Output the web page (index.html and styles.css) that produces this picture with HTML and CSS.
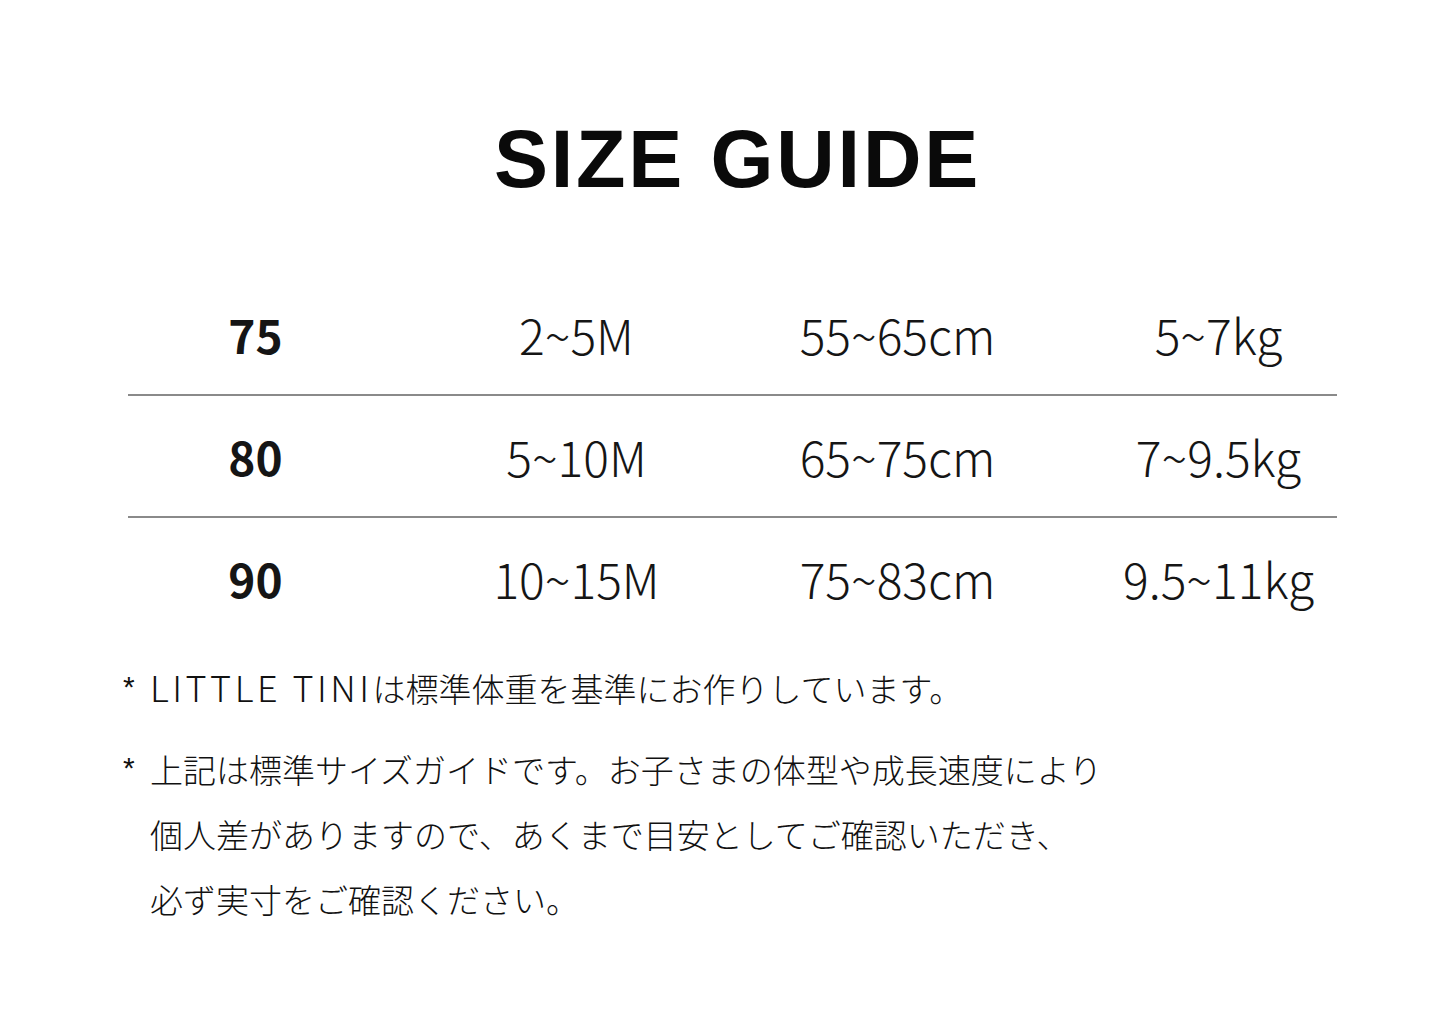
FILE: index.html
```html
<!DOCTYPE html>
<html lang="ja">
<head>
<meta charset="utf-8">
<title>SIZE GUIDE</title>
<link rel="stylesheet" href="styles.css">
</head>
<body>
<main class="page">
  <h1 class="title">SIZE GUIDE</h1>
  <section class="table">
    <div class="row">
      <div class="cell size">75</div>
      <div class="cell">2~5M</div>
      <div class="cell">55~65cm</div>
      <div class="cell">5~7kg</div>
    </div>
    <div class="rule"></div>
    <div class="row">
      <div class="cell size">80</div>
      <div class="cell">5~10M</div>
      <div class="cell">65~75cm</div>
      <div class="cell">7~9.5kg</div>
    </div>
    <div class="rule"></div>
    <div class="row">
      <div class="cell size">90</div>
      <div class="cell">10~15M</div>
      <div class="cell">75~83cm</div>
      <div class="cell">9.5~11kg</div>
    </div>
  </section>
  <section class="notes">
    <p class="note"><span class="mark">*</span><span class="text"><span class="latin">LITTLE TINI</span>は標準体重を基準にお作りしています。</span></p>
    <p class="note"><span class="mark">*</span><span class="text">上記は標準サイズガイドです。お子さまの体型や成長速度により<br>個人差がありますので、あくまで目安としてご確認いただき、<br>必ず実寸をご確認ください。</span></p>
  </section>
</main>
</body>
</html>
```

FILE: styles.css
```css
html, body {
  margin: 0;
  padding: 0;
  background: #ffffff;
}

.page {
  width: 1445px;
  height: 1022px;
  color: #111;
  font-family: "Noto Sans CJK JP", "Noto Sans", sans-serif;
}

.title {
  margin: 0;
  padding-top: 119px;
  padding-left: 30px;
  font-family: "Liberation Sans", Arial, sans-serif;
  font-weight: 700;
  font-size: 81px;
  line-height: 81px;
  letter-spacing: 2.8px;
  text-align: center;
  color: #0a0a0a;
}

.table {
  margin-top: 74px;
}

.row {
  display: grid;
  grid-template-columns: repeat(4, 321px);
  margin-left: 95px;
  height: 120px;
  align-items: center;
}

.cell {
  text-align: center;
  font-size: 48px;
  font-weight: 300;
  line-height: 120px;
  color: #151515;
}

.cell.size {
  font-weight: 700;
  font-size: 46px;
}

.rule {
  margin-left: 128px;
  width: 1209px;
  height: 2px;
  background: #8a8a8a;
}

.notes {
  margin-top: 18px;
  padding-left: 123px;
}

.note {
  display: flex;
  margin: 0 0 16px 0;
  font-size: 33px;
  line-height: 65px;
  font-weight: 300;
  color: #111;
}

.mark {
  width: 27px;
  flex: none;
  font-family: "Liberation Sans", Arial, sans-serif;
  font-size: 30px;
  line-height: 1;
  padding-top: 16px;
}

.latin {
  font-size: 36px;
  line-height: 1;
  letter-spacing: 3.5px;
}
```
